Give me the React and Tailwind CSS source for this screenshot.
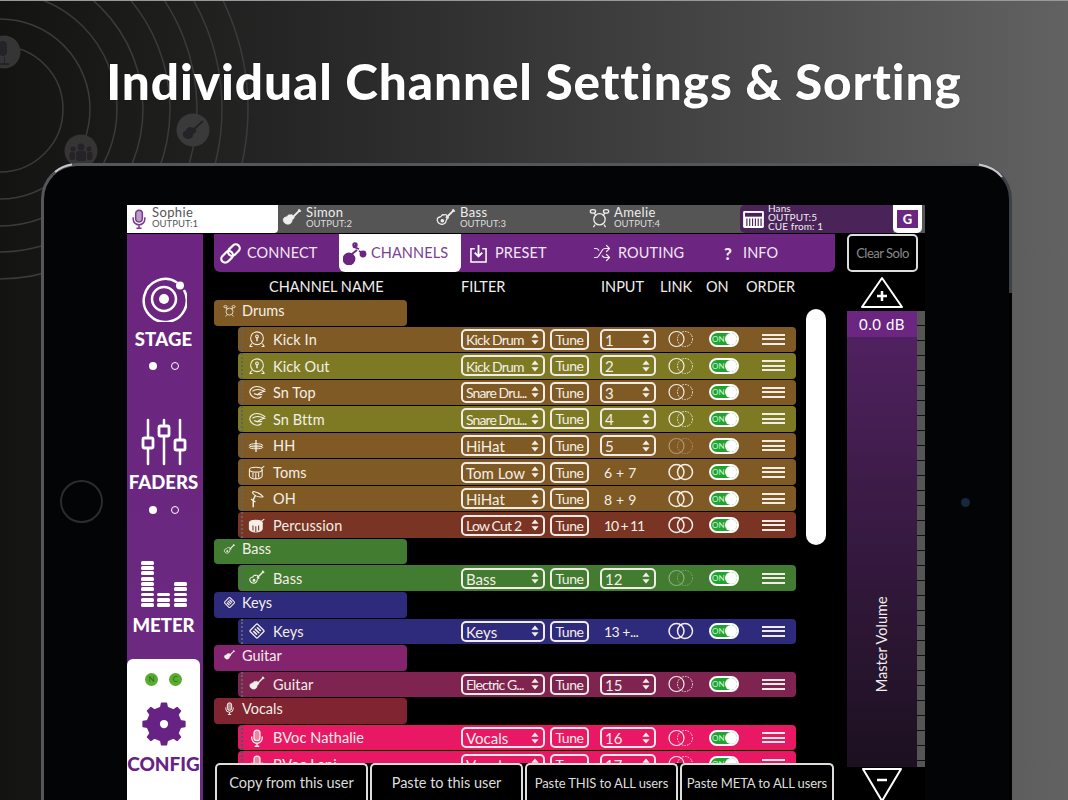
import React from "react";
import { Shuffle } from "lucide-react";

const F = { fontFamily: '"Lato", "Noto Sans", sans-serif' };

const Guitar = ({ className = "", outline = false, c = "currentColor" }) => (
  <svg viewBox="0 0 24 24" className={className} fill={outline ? "none" : c} stroke={c} strokeWidth={outline ? 1.4 : 0.6}>
    <path d="M10.5 8.5c1.2-.6 2.4.2 2.6 1.2l.9 1c.7.5.6 1.7-.2 2-1 .3-1.5 1-1.6 2-.2 2.800-3 4.800-5.800 4-2.800-.6-4.500-3.400-3.900-5.600.4-1.400 1.500-2 2.800-2.200 1.100-.1 1.600-.7 1.900-1.300.5-.9 1.300-1.300 2.300-1.100z" />
    <path d="M12 12 L20 4" strokeWidth="2" fill="none" />
    <path d="M19 2.500l2.500 2.500" strokeWidth="2" fill="none" />
    <circle cx="8" cy="15" r="1.300" fill={outline ? c : "#0000"} stroke={outline ? c : "#0000"} />
  </svg>
);
const Mic = ({ className = "", c = "currentColor", fill = true }) => (
  <svg viewBox="0 0 24 24" className={className} fill="none" stroke={c} strokeWidth="1.800">
    <rect x="8" y="1.500" width="8" height="14" rx="4" fill={fill ? c : "none"} fillOpacity="0.5" />
    <path d="M5 10v2a7 7 0 0 0 14 0v-2M12 19v4M9 23h6" />
  </svg>
);
const DrumKit = ({ className = "", c = "currentColor" }) => (
  <svg viewBox="0 0 24 24" className={className} fill="none" stroke={c} strokeWidth="1.500">
    <circle cx="12" cy="14" r="6.500" />
    <ellipse cx="4.500" cy="5" rx="3" ry="2" /><ellipse cx="19.500" cy="5" rx="3" ry="2" />
    <path d="M6 7l2 3M18 7l-2 3M7 20l-2 3M17 20l2 3" />
  </svg>
);
const Kick = ({ className = "" }) => (
  <svg viewBox="0 0 24 24" className={className} fill="none" stroke="currentColor" strokeWidth="1.400">
    <circle cx="12" cy="11" r="8.500" />
    <circle cx="12" cy="8.500" r="1.800" /><path d="M12 10v5" strokeWidth="2" />
    <path d="M5 18l-2.500 3.500M19 18l2.500 3.500M2 22h4M18 22h4" />
  </svg>
);
const Snare = ({ className = "" }) => (
  <svg viewBox="0 0 24 24" className={className} fill="none" stroke="currentColor" strokeWidth="1.500">
    <path d="M23 9C16 4 9 4 5 7c-4 3-3 8 1 11 4 3 9 3 12 0" />
    <path d="M6 11c4-3 10-3 16 0-4 1-7 2-10 5" />
    <path d="M8 14c3 2 7 2 11 1" />
  </svg>
);
const HiHat = ({ className = "" }) => (
  <svg viewBox="0 0 24 24" className={className} fill="none" stroke="currentColor" strokeWidth="1.500">
    <ellipse cx="12" cy="11" rx="10" ry="2.500" /><ellipse cx="12" cy="14" rx="10" ry="2.200" />
    <path d="M12 3v18" strokeWidth="2" />
  </svg>
);
const Tom = ({ className = "", solid = false }) => (
  <svg viewBox="0 0 24 24" className={className} fill={solid ? "currentColor" : "none"} stroke="currentColor" strokeWidth="1.500">
    <ellipse cx="11" cy="8" rx="9" ry="3.500" />
    <path d="M2 8v9c0 2 4 4 9 4s9-2 9-4V8" />
    <path d="M7 12v7M11 13v8M15 12v7" stroke={solid ? "#7a3423" : "currentColor"} />
    <path d="M19 6l4-3" />
  </svg>
);
const Overhead = ({ className = "" }) => (
  <svg viewBox="0 0 24 24" className={className} fill="none" stroke="currentColor" strokeWidth="1.500">
    <path d="M7 2c5 1 10 3 13 7-5 1-11-1-14-5z" />
    <path d="M10 7L7 13M7 13v10" strokeWidth="2" />
    <path d="M4 12l6 4" />
  </svg>
);
const KeysIcon = ({ className = "" }) => (
  <svg viewBox="0 0 24 24" className={className} fill="none" stroke="currentColor" strokeWidth="1.800">
    <rect x="5" y="5" width="14" height="14" rx="1.500" transform="rotate(45 12 12)" />
    <path d="M9 9l6 6M7 12l5 5M12 7l5 5" strokeWidth="2.200" />
  </svg>
);

const icons = {
  kit: <DrumKit className="w-[16px] h-[16px]" />,
  kick: <Kick className="w-[18px] h-[18px]" />,
  snare: <Snare className="w-[18px] h-[18px]" />,
  hh: <HiHat className="w-[16px] h-[16px]" />,
  tom: <Tom className="w-[17px] h-[17px]" />,
  oh: <Overhead className="w-[18px] h-[20px]" />,
  perc: <Tom solid className="w-[17px] h-[17px]" />,
  bass: <Guitar outline className="w-[18px] h-[18px]" />,
  keys: <KeysIcon className="w-[18px] h-[18px]" />,
  guitar: <Guitar className="w-[18px] h-[18px]" />,
  mic: <Mic className="w-[18px] h-[18px]" />,
};

const BROWN = "bg-[#7f5a24]";
const OLIVE = "bg-[#7e7a24]";
const rows = [
  { g: 1, name: "Drums", bg: BROWN, icon: "kit" },
  { name: "Kick In", bg: BROWN, icon: "kick", f: "Kick Drum", tight: 1, i: "1", link: 0 },
  { name: "Kick Out", bg: OLIVE, icon: "kick", f: "Kick Drum", tight: 1, i: "2", link: 0 },
  { name: "Sn Top", bg: BROWN, icon: "snare", f: "Snare Dru...", nar: 1, i: "3", link: 0 },
  { name: "Sn Bttm", bg: OLIVE, icon: "snare", f: "Snare Dru...", nar: 1, i: "4", link: 0 },
  { name: "HH", bg: BROWN, icon: "hh", f: "HiHat", i: "5", link: 0, dim: 1 },
  { name: "Toms", bg: BROWN, icon: "tom", f: "Tom Low", t: "6 + 7", link: 1 },
  { name: "OH", bg: BROWN, icon: "oh", f: "HiHat", t: "8 + 9", link: 1 },
  { name: "Percussion", bg: "bg-[#7a3423]", icon: "perc", f: "Low Cut 2", tight: 1, t: "10 + 11", nt: 1, link: 1 },
  { g: 1, name: "Bass", bg: "bg-[#427c30]", icon: "bass" },
  { name: "Bass", bg: "bg-[#427c30]", icon: "bass", f: "Bass", i: "12", link: 0, dim: 1 },
  { g: 1, name: "Keys", bg: "bg-[#2e2a7c]", icon: "keys" },
  { name: "Keys", bg: "bg-[#2e2a7c]", icon: "keys", f: "Keys", t: "13 +...", kt: 1, link: 1 },
  { g: 1, name: "Guitar", bg: "bg-[#84246f]", icon: "guitar" },
  { name: "Guitar", bg: "bg-[#7f2450]", icon: "guitar", f: "Electric G...", nar: 1, i: "15", link: 0 },
  { g: 1, name: "Vocals", bg: "bg-[#7f2430]", icon: "mic" },
  { name: "BVoc Nathalie", bg: "bg-[#e91864]", icon: "mic", f: "Vocals", i: "16", link: 0, pink: 1 },
  { name: "BVoc Lani", bg: "bg-[#e91864]", icon: "mic", f: "Vocals", i: "17", link: 0, pink: 1 },
];

const Updown = () => (
  <svg viewBox="0 0 10 14" className="w-[8px] h-[12px] shrink-0" fill="currentColor">
    <path d="M5 0l4.500 5.500h-9zM5 14l4.500-5.500h-9z" />
  </svg>
);

const Select = ({ w, children, nar, tight }) => (
  <div className={`${w} h-[21px] shrink-0 rounded-[5px] border-2 border-[#f1ece6] flex items-center justify-between pl-[3px] pr-[4px]`}>
    <span className={`pt-[2px] leading-none whitespace-nowrap ${nar ? "tracking-[-0.9px] text-[14px]" : tight ? "tracking-[-0.8px] text-[14px]" : "text-[15px]"}`}>{children}</span>
    <Updown />
  </div>
);

const Link = ({ on, dim }) => (
  <svg viewBox="0 0 26 18" className={`w-[26px] h-[18px] ml-[12px] shrink-0 ${dim ? "opacity-40" : ""}`} fill="none" stroke="currentColor" strokeWidth="1.200">
    <circle cx="8.500" cy="9" r="7.500" strokeWidth={on ? 1.500 : 1.200} />
    <circle cx="17" cy="9" r="7.500" strokeWidth={on ? 1.500 : 1} strokeDasharray={on ? undefined : "1.500 1.200"} />
  </svg>
);

const Switch = () => (
  <div className="ml-[15px] w-[30px] h-[16px] shrink-0 rounded-full border-2 border-white bg-[#1fa52f] flex items-center justify-between">
    <span className="text-[8px] leading-none pl-[1px] text-[#d9f2dc]">ON</span>
    <span className="w-[12px] h-[12px] rounded-full bg-white" />
  </div>
);

const Order = () => (
  <div className="ml-[23px] w-[23px] shrink-0 flex flex-col gap-[2.500px]">
    <span className="h-[2px] bg-[#f1ece6]" />
    <span className="h-[2px] bg-[#f1ece6]" />
    <span className="h-[2px] bg-[#f1ece6]" />
  </div>
);

const Row = ({ r }) =>
  r.g ? (
    <div className="h-[26.550px] pb-[1px]">
      <div className={`${r.bg} w-[193px] h-full rounded-[4px] flex items-center text-[#f4efe8] pb-[4px]`}>
        <span className="w-[28px] pl-[9px] shrink-0 flex [&_svg]:w-[13px] [&_svg]:h-[13px]">{icons[r.icon]}</span>
        <span className="text-[14.500px] leading-none">{r.name}</span>
      </div>
    </div>
  ) : (
    <div className="h-[26.550px] pb-[1px] pl-[24px]">
      <div className={`${r.bg} w-[558px] h-full rounded-[4px] flex items-center text-[#f4efe8]`}>
        <span className={`ml-[3px] h-full w-0 border-l-2 border-dotted ${r.pink ? "border-[#1f6a6a]" : "border-[#5f6268]"} shrink-0`} />
        <span className="w-[30px] pl-[5px] shrink-0 flex items-center">{icons[r.icon]}</span>
        <span className="w-[188px] shrink-0 pt-[2px] text-[14.500px] leading-none tracking-[0.1px]">{r.name}</span>
        <Select w="w-[84px]" nar={r.nar} tight={r.tight}>{r.f}</Select>
        <div className="ml-[5px] w-[39px] h-[21px] pt-[1px] shrink-0 rounded-[5px] border-2 border-[#f1ece6] flex items-center justify-center text-[14px] tracking-[-0.4px] leading-none">Tune</div>
        {r.t ? (
          <div className={`ml-[11px] w-[56px] shrink-0 pl-[4px] pt-[2px] text-[14px] leading-none ${r.nt ? "tracking-[-1.1px]" : r.kt ? "tracking-[-0.5px]" : "tracking-[0.2px]"}`}>{r.t}</div>
        ) : (
          <div className="ml-[11px]"><Select w="w-[56px]">{r.i}</Select></div>
        )}
        <Link on={r.link} dim={r.dim} />
        <Switch />
        <Order />
      </div>
    </div>
  );

const Gear = () => {
  let d = "";
  const n = 8;
  for (let k = 0; k < n; k++) {
    const a = (k / n) * Math.PI * 2;
    const pts = [[-0.32, 0.8], [-0.19, 1], [0.19, 1], [0.32, 0.8]];
    pts.forEach(([o, r], j) => {
      const an = a + o * 0.62;
      const x = 24 + 23 * r * Math.sin(an);
      const y = 24 - 23 * r * Math.cos(an);
      d += `${k === 0 && j === 0 ? "M" : "L"}${x.toFixed(2)} ${y.toFixed(2)}`;
    });
  }
  d += "Z";
  return (
    <svg viewBox="0 0 48 48" className="w-[44px] h-[44px]" fill="#672383" stroke="#672383" strokeWidth="1.500" strokeLinejoin="round">
      <path d={d} />
      <circle cx="24" cy="24" r="4.500" fill="#fff" stroke="none" />
    </svg>
  );
};

const Dots = () => (
  <div className="flex justify-center gap-[14px] items-center h-[10px] pr-[3px]">
    <span className="w-[8px] h-[8px] rounded-full bg-white" />
    <span className="w-[8px] h-[8px] rounded-full border border-white" />
  </div>
);

const MeterCol = ({ n }) => (
  <div className="flex flex-col gap-[1.500px] w-[13px]">
    {Array.from({ length: n }).map((_, i) => (
      <span key={i} className="h-[3.800px] bg-white rounded-[1.500px]" />
    ))}
  </div>
);

const Sidebar = () => (
  <div className="w-[76px] shrink-0 flex flex-col bg-gradient-to-b from-[#6c2580] to-[#6a2a80] text-white" style={F}>
    <div className="pt-[42px] flex justify-center pr-[3px]">
      <svg viewBox="0 0 46 46" className="w-[46px] h-[46px]" fill="none" stroke="#fff">
        <path d="M36 6.500A21.500 21.500 0 1 0 43 14" strokeWidth="2.500" />
        <circle cx="23" cy="23" r="12" strokeWidth="2.500" />
        <circle cx="23" cy="23" r="5" fill="#fff" stroke="none" />
        <circle cx="39" cy="9.500" r="4" fill="#fff" stroke="none" />
      </svg>
    </div>
    <div className="mt-[7px] pr-[3px] text-center text-[18.500px] leading-[20px] font-black tracking-[0.2px]">STAGE</div>
    <div className="mt-[12px]"><Dots /></div>
    <div className="mt-[47px] flex justify-center pr-[3px]">
      <svg viewBox="0 0 46 48" className="w-[46px] h-[48px]" fill="none" stroke="#fff" strokeWidth="2.500" strokeLinecap="round">
        <path d="M7 2v16M7 32v14M23 2v4M23 20v26M39 2v18M39 34v12" />
        <rect x="2" y="20" width="10" height="10" rx="1.500" strokeWidth="2.800" />
        <rect x="18" y="8" width="10" height="10" rx="1.500" strokeWidth="2.800" />
        <rect x="34" y="22" width="10" height="10" rx="1.500" strokeWidth="2.800" />
      </svg>
    </div>
    <div className="mt-[6px] pr-[3px] text-center text-[18.500px] leading-[20px] font-black">FADERS</div>
    <div className="mt-[13px]"><Dots /></div>
    <div className="mt-[45px] h-[47px] flex justify-center items-end gap-[3.500px] pr-[3px]">
      <MeterCol n={9} />
      <MeterCol n={3} />
      <MeterCol n={5} />
    </div>
    <div className="mt-[8px] pr-[3px] text-center text-[18.500px] leading-[20px] font-black">METER</div>
    <div className="mt-[24px] flex-1 w-[73px] bg-white rounded-t-[6px] flex flex-col items-center text-[#672383]">
      <div className="mt-[14px] flex gap-[11px]">
        <span className="w-[13px] h-[13px] rounded-full bg-[#58ad2c] text-[8px] leading-[13px] text-center text-[#2d6b2d]">N</span>
        <span className="w-[13px] h-[13px] rounded-full bg-[#58ad2c] text-[8px] leading-[13px] text-center text-[#2d6b2d]">C</span>
      </div>
      <div className="mt-[16px]"><Gear /></div>
      <div className="mt-[8px] text-[19px] leading-[20px] font-black">CONFIG</div>
    </div>
  </div>
);

const UserTab = ({ icon, name, out }) => (
  <div className="w-[154px] shrink-0 flex items-center text-[#eee] pb-[3px]">
    <span className="w-[28px] pl-[3px] flex shrink-0">{icon}</span>
    <div className="flex flex-col">
      <span className="text-[13px] leading-[13px] tracking-[0.4px]">{name}</span>
      <span className="text-[9.500px] leading-[10px] text-[#ddd]">{out}</span>
    </div>
  </div>
);

const UsersBar = () => (
  <div className="h-[28px] mb-[1px] flex bg-[#555555] shrink-0" style={F}>
    <div className="w-[151px] shrink-0 bg-white rounded-br-[4px] flex items-center text-[#555]">
      <span className="w-[25px] pl-[2px] flex shrink-0 text-[#7a3a92]"><Mic className="w-[20px] h-[26px]" /></span>
      <div className="flex flex-col pb-[3px]">
        <span className="text-[13px] leading-[13px] tracking-[0.4px]">Sophie</span>
        <span className="text-[9.500px] leading-[10px]">OUTPUT:1</span>
      </div>
    </div>
    <UserTab name="Simon" out="OUTPUT:2" icon={<Guitar className="w-[22px] h-[22px]" />} />
    <UserTab name="Bass" out="OUTPUT:3" icon={<Guitar outline className="w-[22px] h-[22px]" />} />
    <UserTab name="Amelie" out="OUTPUT:4" icon={<DrumKit className="w-[21px] h-[21px]" />} />
    <div className="w-[153px] shrink-0 bg-[#4a2358] rounded-l-[5px] flex items-center text-[#eee]">
      <svg viewBox="0 0 22 18" className="ml-[3px] w-[21px] h-[17px] shrink-0">
        <rect width="22" height="18" rx="1.500" fill="#fff" />
        <rect x="2" y="2" width="18" height="4" fill="#4a2358" />
        <path d="M4 8v8M7 8v8M10 8v8M13 8v8M16 8v8M19 8v8" stroke="#4a2358" strokeWidth="1.200" />
      </svg>
      <div className="ml-[4px] pb-[3px] flex flex-col text-[10px] leading-[9px] tracking-[0.1px] whitespace-nowrap">
        <span>Hans</span><span>OUTPUT:5</span><span>CUE from: 1</span>
      </div>
    </div>
    <div className="w-[29px] shrink-0 bg-white rounded-b-[5px] flex items-center justify-center">
      <span className="w-[21px] h-[18px] bg-[#6c2580] flex items-center justify-center text-white text-[13px] font-black leading-none">G</span>
    </div>
  </div>
);

const Nav = () => (
  <div className="h-[38px] bg-[#6c2580] rounded-b-[6px] flex text-[#f0e8f2] text-[14.500px] leading-none tracking-[0.1px] shrink-0">
    <div className="w-[125px] pl-[6px] flex items-center gap-[6px]">
      <svg viewBox="0 0 24 24" className="w-[21px] h-[21px]" fill="none" stroke="#fff" strokeWidth="2.600">
        <g transform="rotate(-45 12 12)">
          <rect x="-1" y="7.500" width="15" height="9" rx="4.500" />
          <rect x="10" y="7.500" width="15" height="9" rx="4.500" />
        </g>
      </svg>
      <span>CONNECT</span>
    </div>
    <div className="w-[122px] pl-[4px] flex items-center gap-[4px] bg-white rounded-b-[6px] text-[#7b3f92]">
      <svg viewBox="0 0 24 24" className="w-[24px] h-[24px]" fill="none" stroke="#6c2580" strokeWidth="1.800">
        <circle cx="6" cy="18" r="5.500" fill="#6c2580" />
        <path d="M9 13l5-4M13 3l-2 3 5 2M16 10l4 2" />
        <circle cx="12" cy="4" r="1.800" /><circle cx="20" cy="13" r="2.500" fill="#6c2580" />
      </svg>
      <span>CHANNELS</span>
    </div>
    <div className="w-[132px] pl-[9px] flex items-center gap-[8px]">
      <svg viewBox="0 0 18 20" className="w-[17px] h-[19px]" fill="none" stroke="#fff" strokeWidth="1.600">
        <path d="M5 5H1v14h16V5h-4" />
        <path d="M9 1v11" strokeWidth="2" />
        <path d="M5 9l4 4 4-4" strokeWidth="2" />
      </svg>
      <span>PRESET</span>
    </div>
    <div className="w-[122px] flex items-center gap-[7px]">
      <Shuffle className="w-[18px] h-[18px]" strokeWidth={1.600} />
      <span>ROUTING</span>
    </div>
    <div className="pl-[9px] flex items-center gap-[11px]">
      <span className="font-black text-[17px]">?</span>
      <span>INFO</span>
    </div>
  </div>
);

const Heads = () => (
  <div className="h-[28px] pt-[2px] flex items-center text-[#eeeeee] text-[14.500px] leading-none whitespace-nowrap shrink-0">
    <span className="ml-[55px] w-[192px] shrink-0">CHANNEL NAME</span>
    <span className="w-[140px] shrink-0">FILTER</span>
    <span className="w-[59px] shrink-0">INPUT</span>
    <span className="w-[46px] shrink-0">LINK</span>
    <span className="w-[40px] shrink-0">ON</span>
    <span>ORDER</span>
  </div>
);

const BottomBtn = ({ children, w, nar }) => (
  <div className={`${w} shrink-0 h-[37px] pt-[2px] rounded-t-[5px] border-2 border-b-0 border-[#dddddd] bg-black flex items-center justify-center text-[#dddddd] leading-none whitespace-nowrap ${nar ? "text-[13px] tracking-[-0.1px]" : "text-[14.500px]"}`}>
    {children}
  </div>
);

const TriUp = () => (
  <svg viewBox="0 0 44 33" className="w-[44px] h-[33px]" fill="none" stroke="#fff" strokeWidth="2" strokeLinejoin="round">
    <path d="M22 2L42 31H2z" />
    <path d="M17 20h10M22 15v10" strokeWidth="2.500" />
  </svg>
);
const TriDown = () => (
  <svg viewBox="0 0 44 33" className="w-[44px] h-[33px]" fill="none" stroke="#fff" strokeWidth="2" strokeLinejoin="round">
    <path d="M3 2h38L22 34z" />
    <path d="M17 13h10" strokeWidth="2.500" />
  </svg>
);

const RightCol = () => (
  <div className="ml-[12px] w-[78px] shrink-0 flex flex-col">
    <div className="w-[71px] h-[38px] shrink-0 rounded-[5px] border-2 border-[#dddddd] flex items-center justify-center text-[#8a8a8a] text-[13px] tracking-[-0.5px] leading-none">Clear Solo</div>
    <div className="w-[71px] mt-[4px] h-[33px] flex justify-center shrink-0 pr-[1px]"><TriUp /></div>
    <div className="mt-[2px] flex-1 flex min-h-0">
      <div className="w-[70px] flex flex-col">
        <div className="h-[26px] shrink-0 bg-[#6c2580] flex items-center justify-center text-white text-[15px] tracking-[0.5px] leading-none">0.0 dB</div>
        <div className="flex-1 bg-gradient-to-b from-[#502160] to-[#1c1020] flex items-center justify-center">
          <span className="-rotate-90 whitespace-nowrap text-[#eee] text-[14.500px] leading-none translate-y-[92px]">Master Volume</span>
        </div>
      </div>
      <div className="w-[8px] bg-[repeating-linear-gradient(to_bottom,#555_0px,#555_14px,#111_14px,#111_15px)]" />
    </div>
    <div className="w-[71px] h-[33px] flex justify-center shrink-0 pr-[2px]"><TriDown /></div>
  </div>
);

const Main = () => (
  <div className="w-[621px] shrink-0 flex flex-col min-h-0" style={F}>
    <Nav />
    <Heads />
    <div className="relative flex-1 overflow-hidden min-h-0">
      <div className="w-[582px]">
        {rows.map((r, i) => <Row key={i} r={r} />)}
      </div>
      <div className="absolute left-[592px] top-[9px] w-[20px] h-[236px] bg-white rounded-[10px]" />
    </div>
    <div className="flex gap-[2px] pl-[1px] h-[37px] shrink-0">
      <BottomBtn w="w-[153px]">Copy from this user</BottomBtn>
      <BottomBtn w="w-[153px]">Paste to this user</BottomBtn>
      <BottomBtn w="w-[153px]" nar>Paste THIS to ALL users</BottomBtn>
      <BottomBtn w="w-[154px]" nar>Paste META to ALL users</BottomBtn>
    </div>
  </div>
);

const BgArt = () => (
  <svg className="absolute left-0 top-0 w-[400px] h-[300px]" viewBox="0 0 400 300" fill="none">
    {[63, 90, 117, 143, 170, 197, 222, 248].map((r) => (
      <circle key={r} cx="0" cy="108" r={r} stroke="#3b3b3b" strokeWidth="1.500" />
    ))}
    <circle cx="4" cy="51" r="16.500" fill="#353535" />
    <circle cx="81" cy="150" r="16.500" fill="#353535" />
    <circle cx="193" cy="129" r="16.500" fill="#3a3a3a" />
    <g fill="#252228">
      <rect x="-1" y="40" width="8" height="15" rx="4" />
      <path d="M4 56v6h-4v2h9v-2h-4v-6z" />
      <circle cx="81" cy="146" r="3.500" /><rect x="76" y="150" width="10" height="10" rx="2" />
      <circle cx="73" cy="148" r="2.500" /><rect x="69.500" y="151" width="5.500" height="8" rx="2" />
      <circle cx="89" cy="148" r="2.500" /><rect x="87" y="151" width="5.500" height="8" rx="2" />
    </g>
    <g transform="translate(181,117)">
      <path d="M9 9c-3 0-3 3-5 4-3 1-3 5 0 7s7 1 8-2c0-2 1-3 3-4 1-1 0-3-2-4z" fill="#252228" />
      <path d="M12 12l10-9" stroke="#252228" strokeWidth="2" />
    </g>
  </svg>
);

export default function App() {
  return (
    <div className="relative w-[1068px] h-[800px] overflow-hidden flex flex-col bg-gradient-to-r from-[#131312] via-[#2f2f2f] via-40% to-[#626262] border-t-[1px] border-[#999]" style={F}>
      <BgArt />
      <div className="relative h-[162px] shrink-0 flex justify-center pt-[50px]">
        <h1 className="text-[49.500px] leading-[60px] font-black text-white tracking-[0.9px] whitespace-nowrap [text-shadow:0_0_1px_#000]">Individual Channel Settings &amp; Sorting</h1>
      </div>
      <div className="relative ml-[41px] w-[971px] flex-1 rounded-t-[36px] border-x-[3px] border-t-[3px] border-l-[#55555a] border-r-[#3d4046] border-t-[#55565a] bg-[#030405] pl-[83px] pt-[39px] flex min-h-0">
        <svg className="absolute -left-[3px] -top-[3px] w-[971px] h-[40px]" viewBox="0 0 971 40" fill="none" stroke="#c8c8cc" strokeWidth="2">
          <path d="M14 9Q21 3 31 1.500" />
          <path d="M938 1.500Q953 4 961 14" />
        </svg>
        <span className="absolute -right-[3px] top-[127px] bottom-0 w-[3px] bg-black" />
        <span className="absolute left-[16px] top-[314px] w-[43px] h-[43px] rounded-full border-2 border-[#2c2c2e]" />
        <span className="absolute left-[917px] top-[332px] w-[9px] h-[9px] rounded-full bg-[#16283d]" />
        <div className="w-[798px] flex flex-col bg-black min-h-0">
          <UsersBar />
          <div className="flex-1 flex min-h-0">
            <Sidebar />
            <div className="w-[11px] shrink-0" />
            <Main />
            <RightCol />
          </div>
        </div>
      </div>
    </div>
  );
}
